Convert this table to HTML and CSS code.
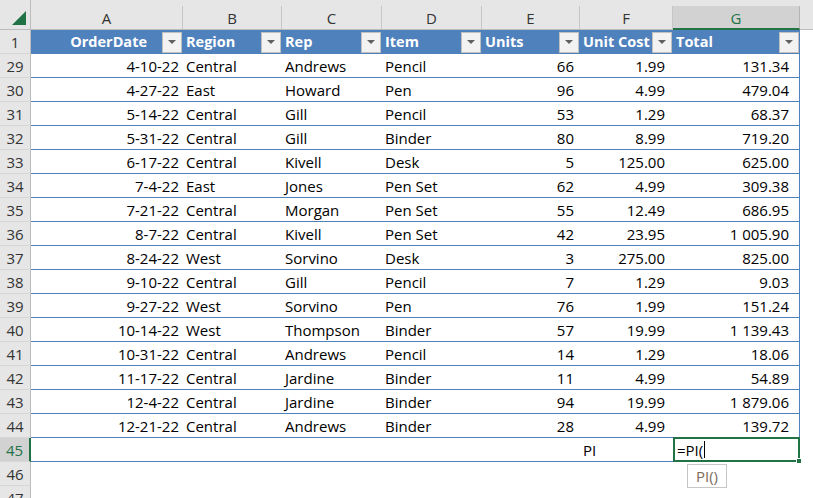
FILE: index.html
```html
<!DOCTYPE html>
<html>
<head>
<meta charset="utf-8">
<link rel="stylesheet" href="styles.css">
</head>
<body>
<div class="sheet">
  <div class="topstrip"></div>
  <div class="row colheads">
    <div class="corner"><span class="tri"></span></div>
    <div class="ch">A</div><div class="ch">B</div><div class="ch">C</div><div class="ch">D</div><div class="ch">E</div><div class="ch">F</div><div class="ch sel">G</div><div class="ch rest"></div>
  </div>
  <div class="row">
    <div class="rh">1</div>
    <div class="th r"><span class="lbl">OrderDate</span><span class="dd"></span></div>
    <div class="th"><span class="lbl">Region</span><span class="dd"></span></div>
    <div class="th"><span class="lbl">Rep</span><span class="dd"></span></div>
    <div class="th"><span class="lbl">Item</span><span class="dd"></span></div>
    <div class="th"><span class="lbl">Units</span><span class="dd"></span></div>
    <div class="th"><span class="lbl">Unit Cost</span><span class="dd"></span></div>
    <div class="th"><span class="lbl">Total</span><span class="dd"></span></div>
    <div class="blank"></div>
  </div>
  <div id="rows"></div>
  <div class="row">
    <div class="rh sel">45</div>
    <div class="td"></div><div class="td"></div><div class="td"></div><div class="td"></div><div class="td"></div>
    <div class="td pi">PI</div>
    <div class="td active">=PI(<span class="caret"></span><span class="handle"></span></div>
    <div class="blank"></div>
  </div>
  <div class="row">
    <div class="rh">46</div>
    <div class="blank span"></div>
  </div>
  <div class="row">
    <div class="rh">47</div>
    <div class="blank span"></div>
  </div>
  <div class="tip">PI()</div>
</div>
<script>
var data = [
["29","4-10-22","Central","Andrews","Pencil","66","1.99","131.34"],
["30","4-27-22","East","Howard","Pen","96","4.99","479.04"],
["31","5-14-22","Central","Gill","Pencil","53","1.29","68.37"],
["32","5-31-22","Central","Gill","Binder","80","8.99","719.20"],
["33","6-17-22","Central","Kivell","Desk","5","125.00","625.00"],
["34","7-4-22","East","Jones","Pen Set","62","4.99","309.38"],
["35","7-21-22","Central","Morgan","Pen Set","55","12.49","686.95"],
["36","8-7-22","Central","Kivell","Pen Set","42","23.95","1 005.90"],
["37","8-24-22","West","Sorvino","Desk","3","275.00","825.00"],
["38","9-10-22","Central","Gill","Pencil","7","1.29","9.03"],
["39","9-27-22","West","Sorvino","Pen","76","1.99","151.24"],
["40","10-14-22","West","Thompson","Binder","57","19.99","1 139.43"],
["41","10-31-22","Central","Andrews","Pencil","14","1.29","18.06"],
["42","11-17-22","Central","Jardine","Binder","11","4.99","54.89"],
["43","12-4-22","Central","Jardine","Binder","94","19.99","1 879.06"],
["44","12-21-22","Central","Andrews","Binder","28","4.99","139.72"]
];
var cls = ["a","b","c","d","e","f","g"];
var html = "";
data.forEach(function(r){
  html += '<div class="row"><div class="rh">' + r[0] + '</div>';
  for (var i = 1; i < 8; i++) html += '<div class="td ' + cls[i-1] + '">' + r[i] + '</div>';
  html += '<div class="blank"></div></div>';
});
document.getElementById("rows").outerHTML = html;
</script>
</body>
</html>
```

FILE: styles.css
```css
* { box-sizing: border-box; }
html, body { margin: 0; padding: 0; background: #fff; }
body { width: 813px; height: 498px; overflow: hidden; font-family: "Open Sans", sans-serif; font-size: 15px; color: #000; }
.sheet { position: relative; width: 813px; }
.topstrip { height: 6px; background: #e6e6e6; }
.row { display: grid; grid-template-columns: 31px 152px 99px 100px 100px 98px 93px 127px 13px; height: 24px; line-height: 20px; }
.colheads { background: #e6e6e6; }
.corner { position: relative; background: #e6e6e6; border-right: 1px solid #bcbcbc; border-bottom: 1px solid #bcbcbc; margin-top: -6px; height: 30px; }
.tri { position: absolute; right: 4px; bottom: 4px; width: 0; height: 0; border-left: 14px solid transparent; border-bottom: 14px solid #217346; }
.ch { display: flex; align-items: center; justify-content: center; border-right: 1px solid #c6c6c6; border-bottom: 1px solid #bcbcbc; color: #333; background: #e6e6e6; padding-top: 1px; }
.ch.sel { background: #d2d2d2; color: #217346; border-bottom: 2px solid #217346; border-right-color: #b4b4b4; }
.ch.rest { border-right: none; }
.rh { display: flex; align-items: center; justify-content: center; background: #e6e6e6; border-right: 1px solid #bcbcbc; border-bottom: 1px solid #d6d6d6; color: #333; }
.rh.sel { background: #d2d2d2; color: #217346; border-right: 2px solid #217346; }
.th { display: flex; align-items: center; background: #4f81bd; color: #fff; font-weight: bold; font-size: 14.5px; padding-left: 3px; padding-right: 1px; }
.th .lbl { flex: 1; white-space: nowrap; }
.th.r .lbl { text-align: right; padding-right: 15px; }
.dd { width: 20px; height: 21px; flex: none; background: #f2f2f2; border: 1px solid #c0c0c0; display: flex; align-items: center; justify-content: center; }
.dd::after { content: ""; width: 0; height: 0; border-left: 4px solid transparent; border-right: 4px solid transparent; border-top: 4px solid #606060; }
.td { display: flex; align-items: center; border-bottom: 1px solid #4f81bd; padding-left: 3px; white-space: nowrap; }
.td.a { justify-content: flex-end; padding-right: 4px; }
.td.e { justify-content: flex-end; padding-right: 6px; }
.td.f { justify-content: flex-end; padding-right: 8px; }
.td.g { justify-content: flex-end; padding-right: 10px; border-right: 1px solid #4f81bd; }
.td.pi { padding-left: 3px; }
.td.active { position: relative; border: 2px solid #217346; margin-top: -1px; height: 25px; padding-left: 2px; }
.caret { display: inline-block; width: 1px; height: 17px; background: #000; margin-left: 1px; }
.handle { position: absolute; right: -4px; bottom: -4px; width: 6px; height: 6px; background: #217346; border: 1px solid #fff; }
.blank { background: #fff; }
.blank.span { grid-column: 2 / -1; }
.tip { position: absolute; left: 687px; top: 464px; width: 40px; height: 24px; background: #fff; border: 1px solid #c6c6c6; color: #7b6a5a; display: flex; align-items: center; justify-content: center; font-size: 15px; }
```
